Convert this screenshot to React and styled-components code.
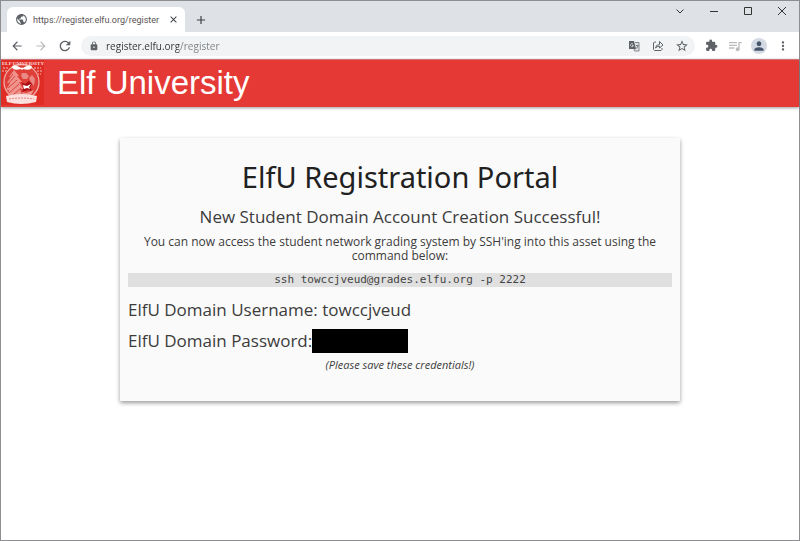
import React, { useState } from 'react';
import styled, { createGlobalStyle } from 'styled-components';
import {
  MdAdd,
  MdArrowBack,
  MdArrowForward,
  MdClose,
  MdExtension,
  MdLock,
  MdMoreVert,
  MdPerson,
  MdPublic,
  MdQueueMusic,
  MdRefresh,
  MdStarBorder
} from 'react-icons/md';

const GlobalStyle = createGlobalStyle`
  * {
    box-sizing: border-box;
  }
  body {
    margin: 0;
    background-color: white;
    color: #3c3c3c;
    font-family: 'Open Sans', 'Noto Sans', sans-serif;
  }
`;

const Window = styled.div`
  display: flex;
  flex-direction: column;
  min-height: 100vh;
  border: 1px solid #8e8e90;
  background-color: white;
`;

const TabStrip = styled.div`
  display: flex;
  justify-content: space-between;
  height: 31px;
  padding-left: 6px;
  background-color: #dee1e6;
`;
const Tabs = styled.div`
  display: flex;
  align-items: flex-end;
`;
const Tab = styled.div`
  display: flex;
  align-items: center;
  width: 178px;
  height: 25px;
  padding: 0 5px 0 8px;
  border-radius: 6px 6px 0 0;
  background-color: white;
  color: #5f6368;
`;
const TabTitle = styled.span`
  flex: 1;
  margin-left: 5px;
  overflow: hidden;
  color: #5a5354;
  font-family: Roboto, sans-serif;
  font-size: 9px;
  white-space: nowrap;
`;
const IconButton = styled.button`
  display: flex;
  align-items: center;
  justify-content: center;
  flex: none;
  width: ${props => props.$width || '24px'};
  height: ${props => props.$height || '24px'};
  padding: 0;
  border: 0;
  background: none;
  color: ${props => props.$color || '#5f6368'};
`;
const WindowButtons = styled.div`
  display: flex;
`;

const Toolbar = styled.div`
  display: flex;
  align-items: center;
  height: 27px;
  padding: 0 4px;
`;
const Omnibox = styled.div`
  display: flex;
  align-items: center;
  flex: 1;
  height: 20px;
  margin: 0 4px;
  padding: 0 1px 0 8px;
  border-radius: 10px;
  background-color: #f1f3f4;
  color: #5f6368;
`;
/* host part is dark, the path after it is lighter */
const Address = styled.input`
  flex: 1;
  min-width: 0;
  margin-left: 7px;
  padding: 0;
  border: 0;
  outline: 0;
  background: linear-gradient(90deg, #303336 73px, #7a7e82 73px);
  background-clip: text;
  color: transparent;
  font-family: 'Open Sans', sans-serif;
  font-size: 10px;
`;
const Avatar = styled.span`
  display: flex;
  align-items: center;
  justify-content: center;
  width: 16px;
  height: 16px;
  border-radius: 50%;
  background-color: #d3dae3;
  color: #47556b;
`;

const Header = styled.header`
  display: flex;
  align-items: flex-start;
  height: 48px;
  border-top: 1px solid #cf7276;
  background-color: #e53935;
  box-shadow: 0 1px 3px rgba(0, 0, 0, 0.4);
`;
const Brand = styled.a`
  display: flex;
  color: white;
  font-family: 'Liberation Sans', Arial, sans-serif;
  font-size: 33px;
  line-height: 46px;
  text-decoration: none;
`;
const BrandName = styled.span`
  margin-left: 13px;
`;

const Main = styled.main`
  display: flex;
  justify-content: center;
  padding: 31px 0;
`;
const Card = styled.section`
  width: 70vw;
  padding: 19px 8px 29px;
  border-radius: 1px;
  background-color: #fafafa;
  box-shadow: 0 2px 4px rgba(0, 0, 0, 0.4);
  text-align: center;
`;
const Title = styled.h1`
  margin: 0 0 10px;
  color: #212121;
  font-family: 'Noto Sans', sans-serif;
  font-size: 29px;
  font-weight: 400;
  line-height: 40px;
`;
const Subtitle = styled.h2`
  margin: 0 0 8px;
  font-size: 17px;
  font-weight: 400;
  line-height: 20px;
`;
const Text = styled.p`
  margin: 0 0 10px;
  font-size: 12px;
  line-height: 14px;
`;
const Command = styled.code`
  display: block;
  margin-bottom: 13px;
  background-color: #e0e0e0;
  color: #444;
  font-family: 'DejaVu Sans Mono', monospace;
  font-size: 11px;
  line-height: 14px;
`;
const Credentials = styled.div`
  display: flex;
  flex-direction: column;
  gap: 11px;
  margin-bottom: 7px;
`;
const Credential = styled.div`
  display: flex;
  align-items: center;
  height: 20px;
  font-size: 17px;
  line-height: 20px;
`;
const Redacted = styled.span`
  width: 96px;
  height: 24px;
  background-color: black;
`;
const Note = styled.p`
  margin: 0;
  font-size: 11px;
  font-style: italic;
  line-height: 14px;
`;
const CrestText = styled.text`
  fill: #fbd9d6;
  font-family: 'Liberation Serif', serif;
  font-size: 5px;
  font-weight: 700;
`;

const windowIcons = [
  { label: 'Search tabs', path: 'M1.5 3.5l3.5 3.5 3.5-3.5' },
  { label: 'Minimize', path: 'M1 5.5h8' },
  { label: 'Maximize', path: 'M1.5 1.5h7v7h-7z' },
  { label: 'Close', path: 'M1 1l8 8M9 1l-8 8' }
];

const Crest = () => (
  <svg width='43' height='45' viewBox='0 0 43 45' aria-hidden='true'>
    <rect width='43' height='45' fill='#df2d26' />
    <circle cx='20.5' cy='22' r='17.5' fill='#de4039' stroke='#f3aaa5' strokeWidth='1.3' />
    <path d='M13 10l5 6h-2l5 6h-3l4 7h-3l2 6H7l1-5H5l4-7H6l4-6H8z' fill='#f0938d' />
    <path
      d='M12 14l-4 5M14 16l-7 8M16 20l-9 8M18 24L8 33M20 28l-8 7'
      fill='none'
      stroke='#d9453e'
    />
    <path d='M21 13h4l3 3-2 3h-4l-2-3zM31 15l3 4-1 7-3-4-2-4z' fill='#e98a84' />
    <path d='M20 22l4 2 4-3 3 3-2 3 2 4-4-1-6 2 2-5z' fill='#a80f14' />
    <path d='M22 25l4 1 4-2-2 3 1 2-3-1-3 1z' fill='#fff' />
    <path d='M21 32l4 1 8-3-3 5h-8z' fill='#f0958f' />
    <CrestText x='1' y='5' textAnchor='start'>ELF</CrestText>
    <CrestText x='43' y='5' textAnchor='end'>UNIVERSITY</CrestText>
    <path
      d='M2 8h6M1 11h5M33 8h7M36 11h5M36 14h4'
      fill='none'
      stroke='#e9756f'
      strokeWidth='2'
      strokeDasharray='2 1'
    />
    <path d='M20 8q-8-5-9-1 1 4 9 2 1 2 2 0 8 2 9-2-1-4-9 1-1-1-2 0z' fill='#fff' />
    <path d='M5 36q15-4 31 0l-1 6q-15 4-29 0z' fill='#fbe0de' />
    <path d='M8 39q13-2 25 0' fill='none' stroke='#e8857f' strokeDasharray='2 1' />
  </svg>
);

const Translate = () => (
  <svg width='12' height='12' viewBox='0 0 12 12' aria-hidden='true'>
    <path d='M7 2.500h4v8.500H6.500L6 9' fill='#dfe1e3' stroke='#85888c' />
    <path d='M1 1h5l2 8H1z' fill='#5f6368' />
    <path d='M5 4A1.500 1.500 0 1 0 5.500 5.500H4' fill='none' stroke='#c9cbcd' />
    <path d='M8 5.500h2.500M10 6L8.500 8.500' fill='none' stroke='#73777b' />
  </svg>
);

const Share = () => (
  <svg
    width='12'
    height='12'
    viewBox='0 0 12 12'
    fill='none'
    stroke='currentColor'
    aria-hidden='true'
  >
    <path d='M4 2H2.500L1.500 3v6.500l1 1h6.500l1-1V8' />
    <path d='M3.500 8Q4 4.500 7.500 4.500v-3L11 5 7.500 8V6.200Q5 6.200 3.500 8z' />
  </svg>
);

const App = () => {
  const [address, setAddress] = useState('register.elfu.org/register');

  return (
    <>
      <GlobalStyle />
      <Window>
        <TabStrip>
          <Tabs>
            <Tab>
              <MdPublic size={13} />
              <TabTitle>https://register.elfu.org/register</TabTitle>
              <IconButton $width='14px' $color='#3c4043' aria-label='Close tab'>
                <MdClose size={11} />
              </IconButton>
            </Tab>
            <IconButton $width='32px' $color='#3c4043' aria-label='New tab'>
              <MdAdd size={14} />
            </IconButton>
          </Tabs>
          <WindowButtons>
            {windowIcons.map(icon => (
              <IconButton
                key={icon.label}
                $width='34px'
                $height='20px'
                $color='#333'
                aria-label={icon.label}
              >
                <svg width='10' height='10' fill='none' stroke='currentColor'>
                  <path d={icon.path} />
                </svg>
              </IconButton>
            ))}
          </WindowButtons>
        </TabStrip>

        <Toolbar>
          <IconButton aria-label='Back'>
            <MdArrowBack size={14} />
          </IconButton>
          <IconButton $color='#babcbe' aria-label='Forward'>
            <MdArrowForward size={14} />
          </IconButton>
          <IconButton aria-label='Reload'>
            <MdRefresh size={16} />
          </IconButton>
          <Omnibox>
            <MdLock size={10} />
            <Address
              aria-label='Address'
              value={address}
              onChange={e => setAddress(e.target.value)}
            />
            <IconButton aria-label='Translate this page'>
              <Translate />
            </IconButton>
            <IconButton aria-label='Share this page'>
              <Share />
            </IconButton>
            <IconButton aria-label='Bookmark this page'>
              <MdStarBorder size={14} />
            </IconButton>
          </Omnibox>
          <IconButton aria-label='Extensions'>
            <MdExtension size={13} />
          </IconButton>
          <IconButton $color='#babcbe' aria-label='Media controls'>
            <MdQueueMusic size={16} />
          </IconButton>
          <IconButton aria-label='Profile'>
            <Avatar>
              <MdPerson size={14} />
            </Avatar>
          </IconButton>
          <IconButton aria-label='Menu'>
            <MdMoreVert size={14} />
          </IconButton>
        </Toolbar>

        <Header>
          <Brand href='#'>
            <Crest />
            <BrandName>Elf University</BrandName>
          </Brand>
        </Header>

        <Main>
          <Card>
            <Title>ElfU Registration Portal</Title>
            <Subtitle>New Student Domain Account Creation Successful!</Subtitle>
            <Text>
              You can now access the student network grading system by SSH'ing
              into this asset using the command below:
            </Text>
            <Command>ssh towccjveud@grades.elfu.org -p 2222</Command>
            <Credentials>
              <Credential>ElfU Domain Username: towccjveud</Credential>
              <Credential>
                ElfU Domain Password:
                <Redacted />
              </Credential>
            </Credentials>
            <Note>(Please save these credentials!)</Note>
          </Card>
        </Main>
      </Window>
    </>
  );
};

export default App;
